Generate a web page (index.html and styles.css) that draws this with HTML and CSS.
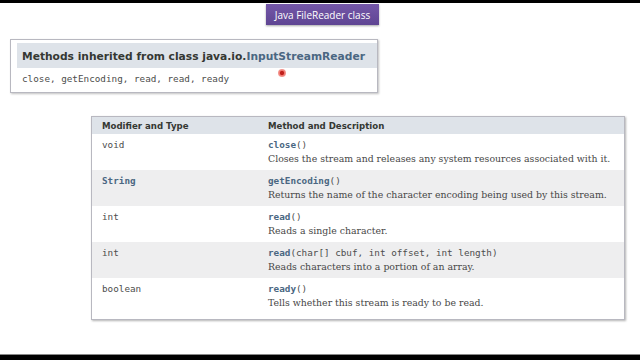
FILE: index.html
```html
<!DOCTYPE html>
<html>
<head>
<meta charset="utf-8">
<link rel="stylesheet" href="styles.css">
</head>
<body>
<div class="screen">
  <div class="topbar"></div>
  <div class="titlewrap"><div class="title">Java FileReader class</div></div>
  <div class="inherited">
    <h3 class="inh-head">Methods inherited from class java.io.<span class="link">InputStreamReader</span></h3>
    <div class="inh-body">close, getEncoding, read, read, ready</div>
    <span class="cursor"></span>
  </div>
  <div class="summary">
    <div class="row head">
      <div class="c1">Modifier and Type</div>
      <div class="c2">Method and Description</div>
    </div>
    <div class="row">
      <div class="c1"><code>void</code></div>
      <div class="c2"><code><b>close</b>()</code><div class="block">Closes the stream and releases any system resources associated with it.</div></div>
    </div>
    <div class="row alt">
      <div class="c1"><code><b>String</b></code></div>
      <div class="c2"><code><b>getEncoding</b>()</code><div class="block">Returns the name of the character encoding being used by this stream.</div></div>
    </div>
    <div class="row">
      <div class="c1"><code>int</code></div>
      <div class="c2"><code><b>read</b>()</code><div class="block">Reads a single character.</div></div>
    </div>
    <div class="row alt">
      <div class="c1"><code>int</code></div>
      <div class="c2"><code><b>read</b>(char[] cbuf, int offset, int length)</code><div class="block">Reads characters into a portion of an array.</div></div>
    </div>
    <div class="row">
      <div class="c1"><code>boolean</code></div>
      <div class="c2"><code><b>ready</b>()</code><div class="block">Tells whether this stream is ready to be read.</div></div>
    </div>
  </div>
  <div class="spacer"></div>
  <div class="bottombar"></div>
</div>
</body>
</html>
```
FILE: styles.css
```css
html, body {
  margin: 0;
  padding: 0;
  background: #000;
}
.screen {
  width: 640px;
  height: 360px;
  background: #fff;
  display: flex;
  flex-direction: column;
  font-family: "DejaVu Sans", sans-serif;
  color: #353833;
  overflow: hidden;
}
.topbar {
  height: 3px;
  background: #000;
  flex: none;
}
.titlewrap {
  display: flex;
  padding-left: 266px;
  padding-top: 1px;
}
.title {
  width: 113px;
  height: 21px;
  box-sizing: border-box;
  background: linear-gradient(#7457a8, #5f4593);
  color: #fff;
  font-family: "Open Sans", sans-serif;
  font-size: 10px;
  display: flex;
  align-items: center;
  justify-content: center;
  box-shadow: 0 1px 2px rgba(0,0,0,0.35);
}
.inherited {
  position: relative;
  margin: 14px 0 0 10px;
  width: 368px;
  height: 54px;
  box-sizing: border-box;
  border: 1px solid #b8b8c0;
  box-shadow: 1px 1px 2px rgba(0,0,0,0.25);
  padding: 3px 0 0 6px;
}
.inh-head {
  margin: 0;
  height: 25px;
  background: #dee3e9;
  font-size: 10.7px;
  font-weight: bold;
  line-height: 27px;
  padding-left: 5px;
  color: #353833;
  white-space: nowrap;
}
.link {
  color: #4a6782;
}
.inh-body {
  font-family: "DejaVu Sans Mono", monospace;
  font-size: 9.3px;
  color: #4d4d4d;
  padding: 5px 0 0 5px;
}
.cursor {
  position: absolute;
  left: 267px;
  top: 29px;
  width: 8px;
  height: 8px;
  border-radius: 50%;
  background: radial-gradient(circle, #c0201c 0 30%, #f07a72 45%, rgba(240,120,110,0.4) 100%);
}
.summary {
  margin: 23px 0 0 91px;
  width: 534px;
  box-sizing: border-box;
  border: 1px solid #b8b8c0;
  box-shadow: 1px 1px 2px rgba(0,0,0,0.3);
  padding-bottom: 5px;
}
.row {
  display: grid;
  grid-template-columns: 176px 1fr;
  height: 36px;
  background: #fff;
}
.row.alt {
  background: #eeeeef;
}
.row.head {
  height: 17px;
  background: #dee3e9;
  font-size: 8.6px;
  font-weight: bold;
  align-items: center;
  color: #353833;
}
.c1 {
  padding-left: 10px;
}
.row:not(.head) .c1, .row:not(.head) .c2 {
  padding-top: 5px;
}
code {
  font-family: "DejaVu Sans Mono", monospace;
  font-size: 9.3px;
  color: #4d4d4d;
  line-height: 12px;
  display: block;
}
code b {
  color: #4a6782;
}
.block {
  font-family: "DejaVu Serif", serif;
  font-size: 9.35px;
  color: #474747;
  line-height: 14px;
  margin-top: 1px;
}
.spacer {
  flex: 1;
}
.bottombar {
  height: 5px;
  background: #000;
  border-top: 1px solid #888;
  flex: none;
}
```
